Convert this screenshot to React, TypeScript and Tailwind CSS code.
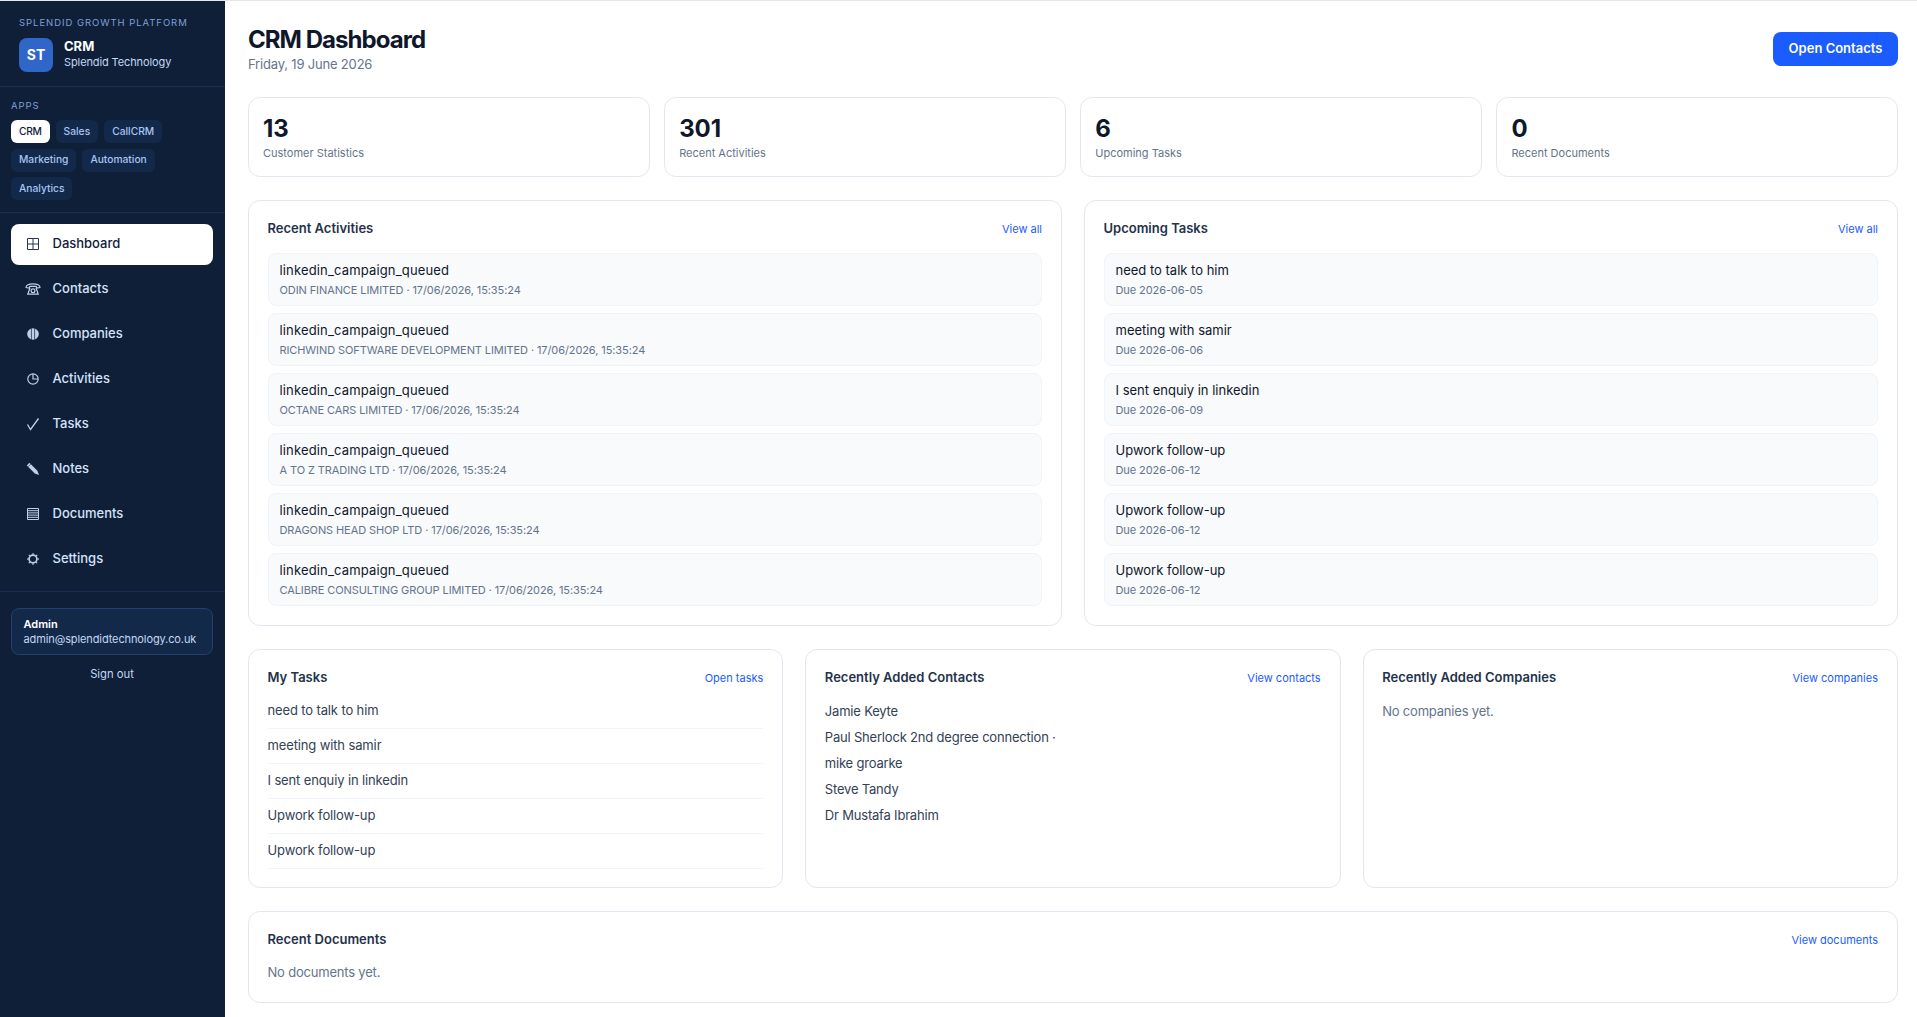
import React from 'react';

const apps = [['CRM', 'Sales', 'CallCRM'], ['Marketing', 'Automation'], ['Analytics']];

const GridIcon = () => (
    <svg viewBox="0 0 16 16" className="block w-4 h-4" fill="none" stroke="currentColor" strokeWidth="1">
        <path d="M2.500 2.500h11v11h-11zM8 2.500v11M2.500 8h11" />
    </svg>
);

const PhoneIcon = () => (
    <svg viewBox="0 0 16 16" className="block w-4 h-4" fill="none" stroke="currentColor" strokeWidth="1.200">
        <path d="M1 6.600C.8 4 4 2.800 8 2.800s7.200 1.200 7 3.800l-3.300.5-.5-1.700H4.800l-.5 1.700z" />
        <path d="M5 6.800 2.800 13.200h10.400L11 6.800" />
        <circle cx="8" cy="9.800" r="1.900" />
    </svg>
);

const CompanyIcon = () => (
    <svg viewBox="0 0 16 16" className="block w-4 h-4">
        <circle cx="8" cy="8" r="5.800" fill="currentColor" />
        <path d="M6.400 2.400v11.200M9.600 2.400v11.200" stroke="#0f1f37" strokeWidth=".7" fill="none" />
    </svg>
);

const ClockIcon = () => (
    <svg viewBox="0 0 16 16" className="block w-4 h-4" fill="none" stroke="currentColor" strokeWidth="1.200">
        <circle cx="8" cy="8" r="5.200" />
        <path d="M8 3v5h5" />
    </svg>
);

const CheckIcon = () => (
    <svg viewBox="0 0 16 16" className="block w-4 h-4" fill="none" stroke="currentColor" strokeWidth="1.300">
        <path d="M2.500 8.500 5.500 13.500l8-11" />
    </svg>
);

const PencilIcon = () => (
    <svg viewBox="0 0 16 16" className="block w-4 h-4">
        <path d="M1.800 4.400l2.600-2.600 8 8 1.600 4.200-4.200-1.600z" fill="currentColor" />
        <path d="M3 5.800l2.800-2.800" stroke="#0f1f37" strokeWidth=".6" fill="none" />
    </svg>
);

const ListIcon = () => (
    <svg viewBox="0 0 16 16" className="block w-4 h-4" fill="none" stroke="currentColor" strokeWidth="1">
        <path d="M2.500 2.500h11v11h-11zM2.500 4.700h11M2.500 6.900h11M2.500 9.100h11M2.500 11.300h11" />
    </svg>
);

const GearIcon = () => (
    <svg viewBox="0 0 16 16" className="block w-4 h-4" fill="none" stroke="currentColor">
        <circle cx="8" cy="8" r="3.900" strokeWidth="1.700" />
        <path d="M8 2.200v1.200M8 12.600v1.200M2.200 8h1.200M12.600 8h1.200M3.900 3.900l.9.9M11.200 11.200l.9.900M3.900 12.100l.9-.9M11.200 4.800l.9-.9" strokeWidth="1.400" />
    </svg>
);

const navItems = [
    { icon: <GridIcon />, label: 'Dashboard' },
    { icon: <PhoneIcon />, label: 'Contacts' },
    { icon: <CompanyIcon />, label: 'Companies' },
    { icon: <ClockIcon />, label: 'Activities' },
    { icon: <CheckIcon />, label: 'Tasks' },
    { icon: <PencilIcon />, label: 'Notes' },
    { icon: <ListIcon />, label: 'Documents' },
    { icon: <GearIcon />, label: 'Settings' },
];

const stats = [
    { value: '13', label: 'Customer Statistics' },
    { value: '301', label: 'Recent Activities' },
    { value: '6', label: 'Upcoming Tasks' },
    { value: '0', label: 'Recent Documents' },
];

const activities = [
    'ODIN FINANCE LIMITED',
    'RICHWIND SOFTWARE DEVELOPMENT LIMITED',
    'OCTANE CARS LIMITED',
    'A TO Z TRADING LTD',
    'DRAGONS HEAD SHOP LTD',
    'CALIBRE CONSULTING GROUP LIMITED',
];

const upcoming = [
    { title: 'need to talk to him', due: '2026-06-05' },
    { title: 'meeting with samir', due: '2026-06-06' },
    { title: 'I sent enquiy in linkedin', due: '2026-06-09' },
    { title: 'Upwork follow-up', due: '2026-06-12' },
    { title: 'Upwork follow-up', due: '2026-06-12' },
    { title: 'Upwork follow-up', due: '2026-06-12' },
];

const myTasks = ['need to talk to him', 'meeting with samir', 'I sent enquiy in linkedin', 'Upwork follow-up', 'Upwork follow-up'];

const contacts = ['Jamie Keyte', 'Paul Sherlock 2nd degree connection ·', 'mike groarke', 'Steve Tandy', 'Dr Mustafa Ibrahim'];

const PanelHead: React.FC<{ title: string; link?: string }> = ({ title, link }) => (
    <div className="flex items-center justify-between h-[21px]">
        <h2 className="-mt-[1px] text-[13px] font-semibold text-[#24324a]">{title}</h2>
        {link && <a className="text-[11px] text-[#1a5cff]">{link}</a>}
    </div>
);

const Row: React.FC<{ title: string; sub: string; wide?: boolean }> = ({ title, sub, wide }) => (
    <div className="h-[52.5px] rounded-lg border border-[#f0f3f8] bg-[#f8fafc] px-[11px] pt-[7px]">
        <div className={`text-[13px] leading-[18px] text-[#0f172a] ${wide ? 'tracking-[0.012em]' : ''}`}>{title}</div>
        <div className="mt-[3px] text-[11px] leading-[16px] tracking-[-0.0085em] text-[#64748b]">{sub}</div>
    </div>
);

const Sidebar = () => (
    <aside className="w-[225px] shrink-0 flex flex-col bg-[#0f1f37]">
        <div className="h-[86px] border-b border-[#1c2f52] px-[19px] pt-[16px]">
            <div className="text-[9.5px] leading-[12px] tracking-[0.1em] text-[#7f9fd8]">SPLENDID GROWTH PLATFORM</div>
            <div className="mt-[9px] flex items-center gap-[11px]">
                <div className="w-[34px] h-[34px] rounded-lg bg-[#2f66c8] flex items-center justify-center pb-[1px] text-[14px] font-bold text-white">ST</div>
                <div className="-mt-[2px]">
                    <div className="text-[13px] leading-[16px] font-bold text-white">CRM</div>
                    <div className="text-[11px] leading-[16px] tracking-[-0.01em] text-[#c4d7f5]">Splendid Technology</div>
                </div>
            </div>
        </div>
        <div className="h-[126px] border-b border-[#1c2f52] px-[11px] pt-[13px]">
            <div className="text-[9.5px] leading-[12px] tracking-[0.1em] text-[#7f9fd8]">APPS</div>
            <div className="mt-[8px] flex flex-col gap-[5.5px]">
                {apps.map((row, i) => (
                    <div key={i} className="flex gap-[6px]">
                        {row.map(app => (
                            <span key={app} className={`h-[23px] px-[8px] rounded-md flex items-center text-[10.25px] font-medium ${app === 'CRM' ? 'bg-white tracking-[-0.03em] text-[#10203b]' : 'bg-[#13294a] text-[#a9c5f2]'}`}>{app}</span>
                        ))}
                    </div>
                ))}
            </div>
        </div>
        <nav className="h-[379px] border-b border-[#1c2f52] pl-[11px] pr-[12px] pt-[11px] flex flex-col gap-[4px]">
            {navItems.map(item => (
                <div key={item.label} className={`h-[41px] rounded-lg flex items-center text-[13px] font-medium ${item.label === 'Dashboard' ? 'bg-white text-[#10203b]' : 'text-[#d4e3fb]'}`}>
                    <span className="w-[41.5px] pl-[13.5px] pb-[1px] opacity-90">{item.icon}</span>
                    <span className="pb-[1px]">{item.label}</span>
                </div>
            ))}
        </nav>
        <div className="pl-[11px] pr-[12px] pt-[16px]">
            <div className="h-[47px] rounded-lg border border-[#23406f] bg-[#13294a] px-[11.5px] flex flex-col justify-center">
                <div className="text-[11px] leading-[15px] font-semibold text-white">Admin</div>
                <div className="text-[11px] leading-[15px] tracking-[-0.01em] text-[#c4d7f5]">admin@splendidtechnology.co.uk</div>
            </div>
            <div className="mt-[11px] text-center text-[11.25px] leading-[16px] text-[#c4d7f5]">Sign out</div>
        </div>
    </aside>
);

const App = () => (
    <div className="h-screen overflow-hidden flex border-t border-[#e5e7eb] bg-white" style={{ fontFamily: 'Inter, sans-serif' }}>
        <Sidebar />
        <main className="flex-1 min-w-0 pl-[23px] pr-[19px] pt-[31px]">
            <header className="flex items-start justify-between h-[65px]">
                <div>
                    <h1 className="text-[24px] leading-[30px] font-bold tracking-[-0.04em] text-[#0f172a] -mt-[7px]">CRM Dashboard</h1>
                    <div className="text-[13px] leading-[18px] tracking-[-0.014em] text-[#64748b]">Friday, 19 June 2026</div>
                </div>
                <button className="w-[125px] h-[34px] rounded-lg bg-[#1a5cff] pb-[1px] text-[13px] font-semibold text-white">Open Contacts</button>
            </header>

            <section className="grid grid-cols-4 gap-[14.5px]">
                {stats.map(stat => (
                    <div key={stat.label} className="h-[80px] rounded-xl border border-[#e2e8f0] px-[14px] pt-[16px]">
                        <div className="text-[24px] leading-[30px] font-bold text-[#0f172a]">{stat.value}</div>
                        <div className="mt-[1px] text-[11px] leading-[16px] text-[#64748b]">{stat.label}</div>
                    </div>
                ))}
            </section>

            <section className="mt-[23px] grid grid-cols-2 gap-[22px]">
                <div className="h-[426px] rounded-xl border border-[#e2e8f0] pl-[18.5px] pr-[19px] pt-[18px]">
                    <PanelHead title="Recent Activities" link="View all" />
                    <div className="mt-[13px] flex flex-col gap-[7.55px]">
                        {activities.map(name => (
                            <Row key={name} wide title="linkedin_campaign_queued" sub={`${name} · 17/06/2026, 15:35:24`} />
                        ))}
                    </div>
                </div>
                <div className="h-[426px] rounded-xl border border-[#e2e8f0] pl-[18.5px] pr-[19px] pt-[18px]">
                    <PanelHead title="Upcoming Tasks" link="View all" />
                    <div className="mt-[13px] flex flex-col gap-[7.55px]">
                        {upcoming.map((task, i) => (
                            <Row key={i} title={task.title} sub={`Due ${task.due}`} />
                        ))}
                    </div>
                </div>
            </section>

            <section className="mt-[23px] grid grid-cols-3 gap-[22px]">
                <div className="h-[239px] rounded-xl border border-[#e2e8f0] pl-[18.5px] pr-[19px] pt-[18px]">
                    <PanelHead title="My Tasks" link="Open tasks" />
                    <div className="mt-[5px]">
                        {myTasks.map((task, i) => (
                            <div key={i} className="h-[35px] border-b border-[#f1f5f9] flex items-center text-[13px] tracking-[-0.01em] text-[#334155]">{task}</div>
                        ))}
                    </div>
                </div>
                <div className="h-[239px] rounded-xl border border-[#e2e8f0] pl-[18.5px] pr-[19px] pt-[18px]">
                    <PanelHead title="Recently Added Contacts" link="View contacts" />
                    <div className="mt-[10px]">
                        {contacts.map(name => (
                            <div key={name} className="h-[26px] flex items-center text-[13px] tracking-[-0.015em] text-[#334155]">{name}</div>
                        ))}
                    </div>
                </div>
                <div className="h-[239px] rounded-xl border border-[#e2e8f0] pl-[18.5px] pr-[19px] pt-[18px]">
                    <PanelHead title="Recently Added Companies" link="View companies" />
                    <div className="mt-[13px] text-[13px] leading-[18px] tracking-[-0.015em] text-[#64748b]">No companies yet.</div>
                </div>
            </section>

            <section className="mt-[23px] h-[92px] rounded-xl border border-[#e2e8f0] pl-[18.5px] pr-[19px] pt-[18px]">
                <PanelHead title="Recent Documents" link="View documents" />
                <div className="mt-[12px] text-[13px] leading-[18px] tracking-[-0.015em] text-[#64748b]">No documents yet.</div>
            </section>
        </main>
    </div>
);

export default App;
